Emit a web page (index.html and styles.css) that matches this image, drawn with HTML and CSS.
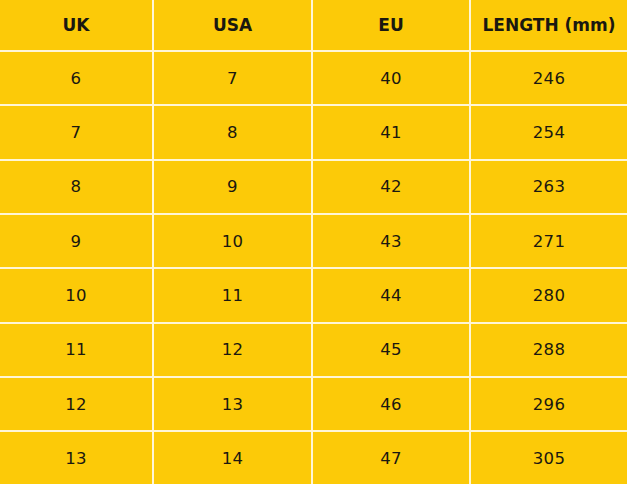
FILE: index.html
```html
<!DOCTYPE html>
<html>
<head>
<meta charset="utf-8">
<link rel="stylesheet" href="styles.css">
</head>
<body>
<div class="table">
  <div class="cell head">UK</div><div class="cell head">USA</div><div class="cell head">EU</div><div class="cell head">LENGTH (mm)</div>
  <div class="cell">6</div><div class="cell">7</div><div class="cell">40</div><div class="cell">246</div>
  <div class="cell">7</div><div class="cell">8</div><div class="cell">41</div><div class="cell">254</div>
  <div class="cell">8</div><div class="cell">9</div><div class="cell">42</div><div class="cell">263</div>
  <div class="cell">9</div><div class="cell">10</div><div class="cell">43</div><div class="cell">271</div>
  <div class="cell">10</div><div class="cell">11</div><div class="cell">44</div><div class="cell">280</div>
  <div class="cell">11</div><div class="cell">12</div><div class="cell">45</div><div class="cell">288</div>
  <div class="cell">12</div><div class="cell">13</div><div class="cell">46</div><div class="cell">296</div>
  <div class="cell">13</div><div class="cell">14</div><div class="cell">47</div><div class="cell">305</div>
</div>
</body>
</html>
```
FILE: styles.css
```css
html, body {
  margin: 0;
  padding: 0;
  background: #fcca08;
  overflow: hidden;
}
.table {
  display: grid;
  grid-template-columns: 152px 157px 156px 156px;
  grid-template-rows: 50px repeat(8, 52.33px);
  gap: 2px;
  background: #fff6d6;
  width: 627px;
  height: 484px;
  overflow: hidden;
  font-family: "DejaVu Sans", sans-serif;
  color: #1a1810;
}
.cell {
  background: #fcca08;
  display: flex;
  align-items: center;
  justify-content: center;
  font-size: 16.5px;
  letter-spacing: 0.3px;
}
.head {
  font-weight: bold;
  font-size: 17px;
  letter-spacing: 0;
}
```
